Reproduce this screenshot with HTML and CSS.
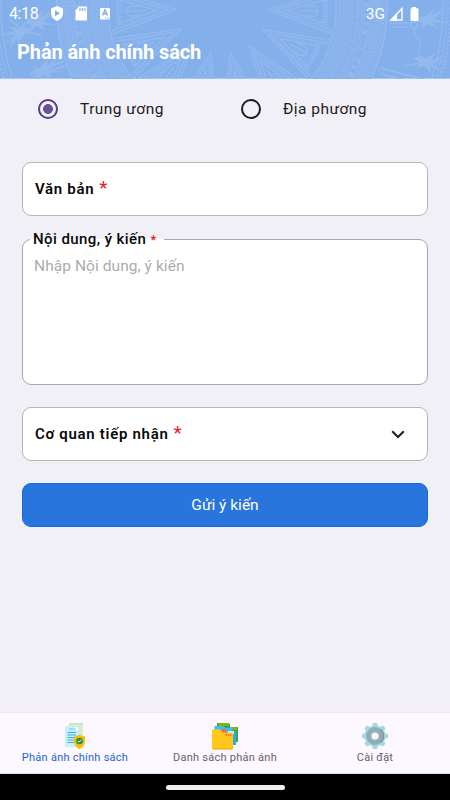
FILE: index.html
```html
<!DOCTYPE html>
<html lang="vi">
<head>
<meta charset="utf-8">
<title>Phản ánh chính sách</title>
<link rel="stylesheet" href="styles.css">
</head>
<body>
<header class="header">
  <svg class="drum" viewBox="0 0 450 79" aria-hidden="true">
    <defs>
      <g id="ray">
        <path d="M46 0L113-23M46 0L113 23M53 0L111-19M53 0L111 19M65 0L104-12V12Z" stroke-width="1.5"/>
        <path d="M60-1L108-16M60 1L108 16" stroke-width="2" stroke-dasharray="1 2"/>
        <path d="M76 0H98M84-4Q94-8 96 0Q94 8 84 4" stroke-width="1.5"/>
        <path d="M103-13V13" stroke-width="6" stroke-dasharray="1 1.5"/>
      </g>
      <g id="bird">
        <path d="M-12 1L-5-3L-2-1L9-9L5-2L17-5L7 2L16 7L5 5L8 12L0 6L-8 10L-5 4Z" fill="#94b9ef" stroke="none"/>
        <path d="M4 0L19-9M5 2L21-2M5 5L20 8"/>
      </g>
    </defs>
    <g fill="none" stroke="#92b8ee">
      <circle cx="222" cy="8" r="139" stroke="#88b2ec" stroke-width="51"/>
      <g transform="translate(222 8)">
        <use href="#ray" transform="rotate(2)"/><use href="#ray" transform="rotate(28)"/><use href="#ray" transform="rotate(54)"/><use href="#ray" transform="rotate(79)"/><use href="#ray" transform="rotate(104)"/><use href="#ray" transform="rotate(129)"/><use href="#ray" transform="rotate(153)"/><use href="#ray" transform="rotate(178)"/>
        <circle r="114" stroke-width="1.5"/><circle r="118"/><circle r="126"/><circle r="129"/><circle r="137"/><circle r="140"/><circle r="149"/><circle r="152"/><circle r="158"/><circle r="165" stroke-width="2"/>
        <circle r="122" stroke-width="3" stroke-dasharray="1 2"/>
        <circle r="133" stroke-width="5" stroke-dasharray="4 2"/>
        <circle r="133" stroke="#83afea" stroke-width="3" stroke-dasharray="3 3"/>
        <circle r="145" stroke-width="6" stroke-dasharray="2 4 6 3"/>
        <circle r="145" stroke="#83afea" stroke-width="3" stroke-dasharray="4 5"/>
        <circle r="155" stroke-width="3" stroke-dasharray="2 2"/>
        <circle r="161" stroke-width="3" stroke-dasharray="1 2"/>
        <circle r="221" stroke-width="1.5"/><circle r="225"/><circle r="229" stroke-width="3" stroke-dasharray="2 2"/>
      </g>
      <use href="#bird" transform="translate(427 18) rotate(-10)"/><use href="#bird" transform="translate(426 60) rotate(12)"/>
      <path d="M416 27Q412 33 417 37Q422 42 419 48Q417 53 420 58M404 65Q411 66 421 62M390 23H412M389 27H409" stroke-width="1.6"/><circle cx="414" cy="25" r="3" stroke-width="2"/>
      <use href="#bird" transform="translate(36 20) rotate(-8)"/><use href="#bird" transform="translate(22 34) rotate(155)"/><use href="#bird" transform="translate(42 69) rotate(-15)"/>
      <path d="M10 20L24 31L42 35M30 74L64 61M33 77L67 65" stroke-width="2"/><circle cx="38" cy="72" r="3"/>
      <path d="M380 68L430 81M382 74L415 83" stroke-width="2"/><circle cx="382" cy="70" r="3.500"/>
    </g>
  </svg>
  <div class="status">
    <span class="clock">4:18</span>
    <svg class="status-left" viewBox="0 0 62 18">
      <path d="M7 1L13 3.500V8Q13 13.500 7 16Q1 13.500 1 8V3.500Z" fill="#fff"/><path d="M5 5.200V11.200L10 8.200Z" fill="#83afea"/>
      <path d="M29 1.500H36.200Q37 1.500 37 2.400V14.500Q37 15.500 36 15.500H26.500Q25.500 15.500 25.500 14.500V5.200Z" fill="#fff"/><path d="M30 3V6M32.500 3V6M35 3V6" stroke="#83afea" stroke-width="1.2"/>
      <rect x="50" y="3" width="10" height="11.500" rx="1" fill="#fff"/><path d="M52.500 10.500L55 4.800L57.500 10.500M53.300 8.800H56.700" fill="none" stroke="#83afea" stroke-width="1.4"/><path d="M55 13H56M57 13H59" stroke="#83afea"/>
    </svg>
    <span class="network">3G</span>
    <svg class="status-right" viewBox="0 0 32 18">
      <path d="M2 15L13 3.500V15Z" fill="none" stroke="#fff" stroke-width="1.4"/><path d="M1 15.700L8 8V15.700Z" fill="#fff"/>
      <path d="M23 2H27V3.300H28.500Q29.500 3.300 29.500 4.300V15Q29.500 16 28.500 16H22.500Q21.500 16 21.500 15V4.300Q21.500 3.300 22.500 3.300H23Z" fill="#fff"/>
    </svg>
  </div>
  <h1 class="title">Phản ánh chính sách</h1>
</header>
<main class="form">
  <div class="radios">
    <label class="radio selected"><i class="dot"></i><span>Trung ương</span></label>
    <label class="radio"><i class="dot"></i><span>Địa phương</span></label>
  </div>
  <div class="field document"><b>Văn bản</b><span class="star">*</span></div>
  <fieldset class="content"><legend>Nội dung, ý kiến <span class="small-star">*</span></legend><div class="placeholder">Nhập Nội dung, ý kiến</div></fieldset>
  <div class="field agency"><b>Cơ quan tiếp nhận</b><span class="star">*</span>
    <svg class="chevron" viewBox="0 0 14 9"><path d="M1.2 1.2L7 7L12.8 1.2" fill="none" stroke="#1d1b26" stroke-width="2"/></svg></div>
  <button class="submit">Gửi ý kiến</button>
</main>
<nav class="tabs">
  <div class="tab active">
    <svg viewBox="0 0 28 28"><path d="M8 2H22V23H8Z" fill="#d5efcf"/><path d="M8 1.800H22" stroke="#b9dfa9"/><path d="M4 4H15L18 8V25H4Z" fill="#c8effa"/><path d="M15 4V8H18" fill="#fff"/><path d="M8 7H14" stroke="#78cee6"/><path d="M6.500 10.500H15M6.500 13H15M6.500 15.500H14M6.500 18H13M6.500 20.500H13" stroke="#35afea" stroke-width="1.2"/><path d="M18.500 12.500Q21 14.500 24 14.500V19Q24 24 18.500 27Q13 24 13 19V14.500Q16 14.500 18.500 12.500Z" fill="#fbbb08"/><circle cx="18.500" cy="19" r="3.300" fill="#21933c"/><path d="M16.800 19L18 20.200L20.400 17.700" fill="none" stroke="#fff"/></svg>
    <span>Phản ánh chính sách</span>
  </div>
  <div class="tab">
    <svg viewBox="0 0 28 28"><path d="M14 5H27V20H14Z" fill="#459e50"/><path d="M19 5H26V8H19Z" fill="#79b926"/><path d="M6 1H11L12 2H19V9H6Z" fill="#359447"/><path d="M7 1H18V4H7Z" fill="#7ab51d"/><path d="M14 9H25V23H14Z" fill="#29aeea"/><path d="M3.500 4H12L14 5.500H21V10H3.500Z" fill="#40bdf0"/><path d="M17 9H23V12H17Z" fill="#d7f4fb"/><path d="M10 7H15L15 11H10Z" fill="#ed7042"/><path d="M2 7.500H9.500L11.500 10.500H21Q22 10.500 22 11.500V26Q22 27.500 20.500 27.500H2.500Q1 27.500 1 26V9Q1 7.500 2 7.500Z" fill="#ffc91c"/><path d="M2 26.800H20.500Q22 26.800 22 24.500" fill="none" stroke="#f2a91e"/><path d="M14.500 13H21" stroke="#ef604b" stroke-width="1.6" stroke-dasharray="1.5 .6"/></svg>
    <span>Danh sách phản ánh</span>
  </div>
  <div class="tab">
    <svg viewBox="0 0 28 28"><g fill="#a5d7e1"><circle cx="14" cy="14" r="10.500"/><path id="tooth" d="M11 5L12 1H16L17 5ZM11 23L12 27H16L17 23Z"/><use href="#tooth" transform="rotate(45 14 14)"/><use href="#tooth" transform="rotate(90 14 14)"/><use href="#tooth" transform="rotate(135 14 14)"/></g><circle cx="14" cy="14" r="6.300" fill="none" stroke="#8fb0b8" stroke-width="5.400"/><path d="M19 7.300A8.300 8.300 0 0 1 19 20.700" fill="none" stroke="#78979f" stroke-width="1.500"/><circle cx="14" cy="14" r="3.600" fill="#fcf5fc"/></svg>
    <span>Cài đặt</span>
  </div>
</nav>
<footer class="system"><i class="handle"></i></footer>
</body>
</html>
```
FILE: styles.css
```css
* { box-sizing: border-box; }
body {
  margin: 0; width: 450px; height: 800px; overflow: hidden;
  display: flex; flex-direction: column;
  font-family: Roboto, "Liberation Sans", sans-serif;
  background: #f1f0f6; color: #1c1b20;
}
.header { position: relative; height: 79px; flex: none; background: #83afea; color: #fff; border-bottom: 1px solid #a9c8f1; }
.drum { position: absolute; inset: 0; width: 450px; height: 79px; }
.status { position: relative; display: flex; align-items: center; height: 27px; padding: 0 29px 0 9px; font-size: 16px; }
.clock { width: 41px; letter-spacing: -.4px; }
.status-left { width: 62px; height: 18px; }
.network { margin-left: auto; font-size: 15.500px; }
.status-right { width: 32px; height: 18px; margin-left: 4px; }
.title { position: relative; margin: 11px 0 0 17px; font-size: 20px; line-height: 28px; font-weight: 700; letter-spacing: -.1px; }
.form { flex: 1; padding: 0 22px; }
.radios { display: grid; grid-template-columns: 203px 203px; height: 60px; }
.radio { display: flex; align-items: center; height: 60px; padding-left: 16px; gap: 22px; font-size: 15.500px; letter-spacing: .45px; }
.dot { width: 20px; height: 20px; border: 2px solid #1c1a24; border-radius: 50%; }
.selected .dot { border-color: #563b87; background: radial-gradient(circle, #68528f 0 4.600px, transparent 5.200px); }
.field { display: flex; align-items: center; width: 406px; height: 54px; padding: 0 22px 0 12px; background: #fff; border: 1px solid #b6b6b8; border-radius: 9px; font-size: 15px; letter-spacing: .7px; color: #080808; }
.field b { font-weight: 600; }
.document { margin-top: 23px; }
.star { color: #e02020; margin: -2px 0 0 5px; font-size: 19px; line-height: 18px; font-weight: 400; }
.content { width: 406px; height: 155px; margin: 14px 0 0; padding: 0 11px; background: #fff; border: 1px solid #a6a6a8; border-radius: 9px; }
.content legend { margin-left: -4px; padding: 1px 7px 0 3px; font-size: 15px; line-height: 16px; font-weight: 500; letter-spacing: .42px; color: #080808; }
.small-star { color: #e02020; font-size: 13px; }
.placeholder { margin-top: 9px; font-size: 15.500px; line-height: 18px; letter-spacing: .07px; color: #acacac; }
.agency { margin-top: 22px; }
.chevron { width: 14px; height: 9px; margin-left: auto; }
.submit { display: block; width: 406px; height: 44px; margin-top: 22px; padding: 0; border: 1px solid #1169e0; border-radius: 9px; background: #2875de; color: #fff; font: 15.500px Roboto, sans-serif; }
.tabs { display: grid; grid-template-columns: repeat(3, 1fr); height: 62px; flex: none; background: #fdf7ff; border-top: 1px solid #edebf1; border-bottom: 1px solid #e5dfe6; }
.tab { display: flex; flex-direction: column; align-items: center; padding-top: 9px; font-size: 11px; line-height: 16px; letter-spacing: .25px; color: #65616a; }
.tab svg { width: 28px; height: 28px; }
.active { color: #1b67ce; }
.system { display: flex; align-items: center; justify-content: center; height: 26px; flex: none; background: #000; }
.handle { width: 119px; height: 5px; border-radius: 3px; background: #eee; }
```
